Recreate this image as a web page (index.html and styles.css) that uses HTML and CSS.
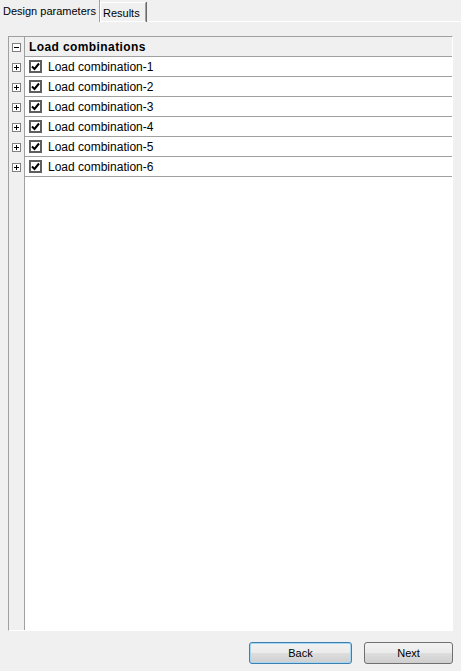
FILE: index.html
```html
<!DOCTYPE html>
<html>
<head>
<meta charset="utf-8">
<link rel="stylesheet" href="styles.css">
</head>
<body>
<div class="window">
  <div class="tabs">
    <div class="tab active">Design parameters</div>
    <div class="tab">Results</div>
    <div class="tab-fill"></div>
  </div>
  <div class="page">
    <div class="grid">
      <div class="row header">
        <div class="gutter"><span class="toggle minus"></span></div>
        <div class="cell">Load combinations</div>
      </div>
      <div class="row">
        <div class="gutter"><span class="toggle plus"></span></div>
        <div class="cell"><span class="check"><svg viewBox="0 0 9 9" width="9" height="9"><path d="M1 4.5 L3.5 7 L8 1.5" fill="none" stroke="#000" stroke-width="2"/></svg></span>Load combination-1</div>
      </div>
      <div class="row">
        <div class="gutter"><span class="toggle plus"></span></div>
        <div class="cell"><span class="check"><svg viewBox="0 0 9 9" width="9" height="9"><path d="M1 4.5 L3.5 7 L8 1.5" fill="none" stroke="#000" stroke-width="2"/></svg></span>Load combination-2</div>
      </div>
      <div class="row">
        <div class="gutter"><span class="toggle plus"></span></div>
        <div class="cell"><span class="check"><svg viewBox="0 0 9 9" width="9" height="9"><path d="M1 4.5 L3.5 7 L8 1.5" fill="none" stroke="#000" stroke-width="2"/></svg></span>Load combination-3</div>
      </div>
      <div class="row">
        <div class="gutter"><span class="toggle plus"></span></div>
        <div class="cell"><span class="check"><svg viewBox="0 0 9 9" width="9" height="9"><path d="M1 4.5 L3.5 7 L8 1.5" fill="none" stroke="#000" stroke-width="2"/></svg></span>Load combination-4</div>
      </div>
      <div class="row">
        <div class="gutter"><span class="toggle plus"></span></div>
        <div class="cell"><span class="check"><svg viewBox="0 0 9 9" width="9" height="9"><path d="M1 4.5 L3.5 7 L8 1.5" fill="none" stroke="#000" stroke-width="2"/></svg></span>Load combination-5</div>
      </div>
      <div class="row">
        <div class="gutter"><span class="toggle plus"></span></div>
        <div class="cell"><span class="check"><svg viewBox="0 0 9 9" width="9" height="9"><path d="M1 4.5 L3.5 7 L8 1.5" fill="none" stroke="#000" stroke-width="2"/></svg></span>Load combination-6</div>
      </div>
      <div class="row filler">
        <div class="gutter"></div>
        <div class="cell"></div>
      </div>
    </div>
    <div class="footer">
      <button class="btn default">Back</button>
      <button class="btn next">Next</button>
    </div>
  </div>
</div>
</body>
</html>
```

FILE: styles.css
```css
html, body {
  margin: 0;
  padding: 0;
  background: #f0f0f0;
}
body {
  font-family: "Liberation Sans", Arial, sans-serif;
  font-size: 11px;
  color: #000;
}
.window {
  width: 461px;
  height: 671px;
  display: flex;
  flex-direction: column;
  overflow: hidden;
}
.tabs {
  display: flex;
  height: 22px;
  align-items: flex-end;
}
.tab {
  box-sizing: border-box;
  height: 20px;
  padding: 3px 2px 0 3px;
  line-height: 14px;
  border-top: 1px solid #fff;
  border-left: 1px solid #fff;
  border-right: 1px solid #a0a0a0;
  box-shadow: 1px 0 0 #696969;
  margin-right: 1px;
  white-space: nowrap;
  border-bottom: 1px solid #fff;
}
.tab.active {
  height: 22px;
  width: 100px;
  padding: 4px 0 0 3px;
  border-top: none;
  border-left: none;
  border-bottom: none;
  box-shadow: none;
  margin-right: 0;
}
.tab:not(.active) {
  width: 46px;
  padding-left: 2px;
}
.tab-fill {
  flex: 1;
  height: 22px;
  box-sizing: border-box;
  border-bottom: 1px solid #fff;
  margin-left: 1px;
}
.page {
  flex: 1;
  display: flex;
  flex-direction: column;
  padding: 14px 8px 8px 8px;
}
.grid {
  box-sizing: border-box;
  width: 445px;
  height: 595px;
  border-top: 1px solid #a0a0a0;
  border-left: 1px solid #a0a0a0;
  border-right: 1px solid #fff;
  border-bottom: 1px solid #fff;
  display: flex;
  flex-direction: column;
  background: #fff;
}
.row {
  display: flex;
  height: 20px;
  flex: none;
}
.gutter {
  width: 15px;
  flex: none;
  background: #f0f0f0;
  border-right: 1px solid #a0a0a0;
  display: flex;
  align-items: center;
  justify-content: center;
}
.cell {
  flex: 1;
  box-sizing: border-box;
  border-bottom: 1px solid #a0a0a0;
  display: flex;
  align-items: center;
  padding-left: 4px;
  font-size: 12px;
  white-space: nowrap;
}
.header .cell {
  background: #f0f0f0;
  font-weight: bold;
  letter-spacing: 0.4px;
}
.filler {
  flex: 1;
}
.filler .cell {
  border-bottom: none;
}
.toggle {
  box-sizing: border-box;
  width: 9px;
  height: 9px;
  border: 1px solid #808080;
  background: #fff;
  position: relative;
}
.toggle::before {
  content: "";
  position: absolute;
  left: 1px;
  top: 3px;
  width: 5px;
  height: 1px;
  background: #000;
}
.toggle.plus::after {
  content: "";
  position: absolute;
  left: 3px;
  top: 1px;
  width: 1px;
  height: 5px;
  background: #000;
}
.check {
  box-sizing: border-box;
  width: 13px;
  height: 13px;
  border: 2px solid #5e5e5e;
  background: #fff;
  display: inline-flex;
  align-items: center;
  justify-content: center;
  margin-right: 6px;
}
.check svg {
  display: block;
}
.footer {
  display: flex;
  justify-content: flex-end;
  gap: 12px;
  margin-top: 11px;
}
.btn {
  box-sizing: border-box;
  height: 22px;
  font-family: "Liberation Sans", Arial, sans-serif;
  font-size: 11px;
  color: #000;
  border-radius: 3px;
  border: 1px solid #707070;
  background: linear-gradient(#f2f2f2 0%, #ebebeb 50%, #dddddd 51%, #cfcfcf 100%);
  padding: 0;
}
.btn.default {
  width: 103px;
  border-color: #3c7fb1;
  box-shadow: inset 0 0 0 1px #a6d7f2;
}
.btn.next {
  width: 89px;
}
```
